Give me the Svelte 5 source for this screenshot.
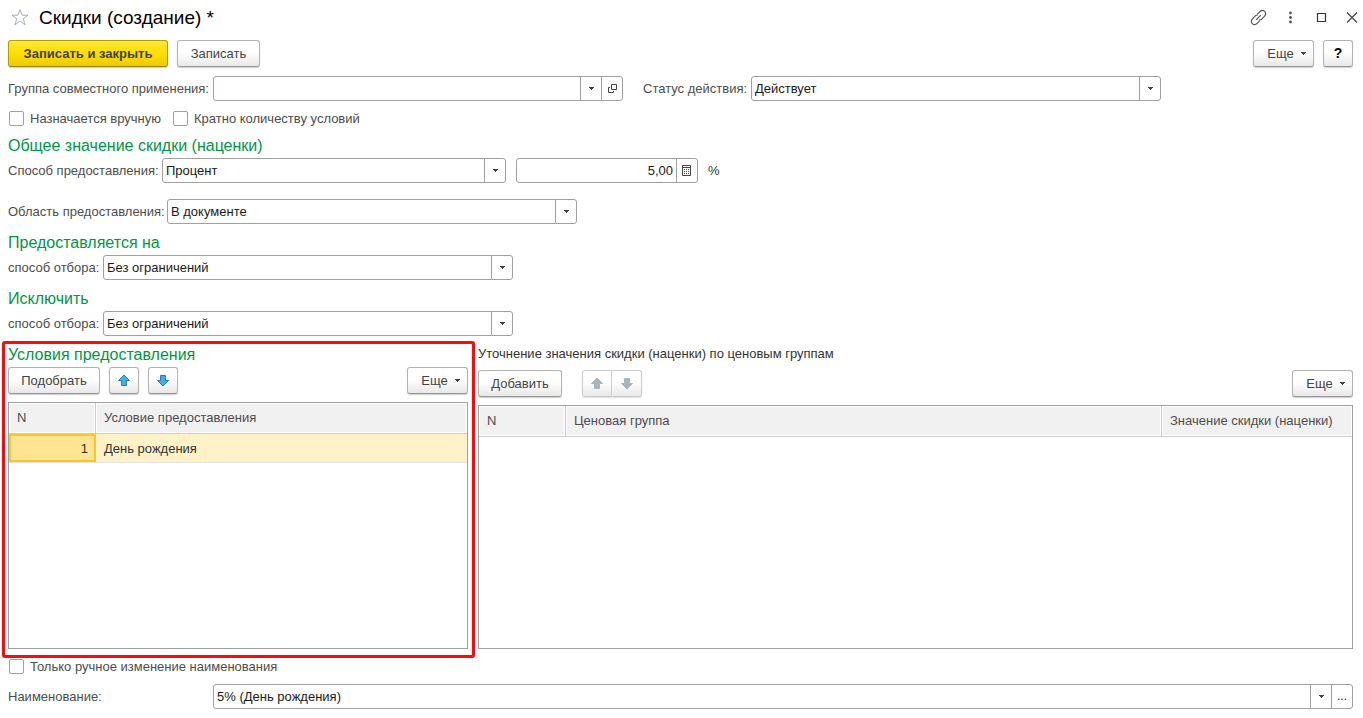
<script>
  let group = $state('');
  let status = $state('Действует');
  let method = $state('Процент');
  let amount = $state('5,00');
  let area = $state('В документе');
  let include = $state('Без ограничений');
  let exclude = $state('Без ограничений');
  let name = $state('5% (День рождения)');
  let manual = $state(false);
  let multiple = $state(false);
  let manualName = $state(false);
  const conditions = [{ n: 1, title: 'День рождения' }];
</script>

{#snippet caret()}
  <svg class="caret" width="5" height="3" viewBox="0 0 5 3" aria-hidden="true"><path d="M0 0h5v1H4v1H3v1H2V2H1V1H0z" fill="#444" /></svg>
{/snippet}

{#snippet arrow(down)}
  <svg width="14" height="14" viewBox="0 0 14 14" aria-hidden="true">
    <path class="arrow" d={down ? 'M7 12L1.5 6.5H4.5V1.5H9.5V6.5H12.5z' : 'M7 1L12.5 6.5H9.5V11.5H4.5V6.5H1.5z'} stroke-linejoin="round" />
  </svg>
{/snippet}

{#snippet more()}
  <button class="btn more" type="button">Еще {@render caret()}</button>
{/snippet}

{#snippet choice(id, value, extra)}
  <div class="field {extra}">
    <select {id}><option>{value}</option></select>
    <span class="side">{@render caret()}</span>
  </div>
{/snippet}

<main>
  <header>
    <button class="icon" type="button" aria-label="В избранное">
      <svg width="20" height="20" viewBox="0 0 20 20"><path d="M10 1.5l2 5.7h6l-4.8 3.6 1.9 6-5.1-3.6-5.1 3.6 1.9-6L2 7.2h6z" fill="none" stroke="#a9b1bc" stroke-width="1" /></svg>
    </button>
    <h1>Скидки (создание) *</h1>
    <div class="window">
      <button class="icon" type="button" aria-label="Ссылка">
        <svg width="18" height="18" viewBox="0 0 18 18" fill="none" stroke="#555" stroke-width="1.2">
          <path d="M7.2 5.300l2.700-2.700c1.400-1.400 3.500-1.400 4.800-.2s1.300 3.400-.1 4.800l-2.900 2.900c-.8.8-1.700 1-2.700.9" />
          <path d="M9.800 11.700l-2.700 2.700c-1.400 1.400-3.500 1.400-4.800.2s-1.300-3.400.1-4.800l2.900-2.900c.8-.8 1.700-1 2.700-.9" />
          <path d="M6.200 10.800l4.600-4.600" />
        </svg>
      </button>
      <button class="icon" type="button" aria-label="Меню">
        <svg width="18" height="18" viewBox="0 0 18 18" fill="#555"><circle cx="9.5" cy="4" r="1.400" /><circle cx="9.5" cy="8.500" r="1.400" /><circle cx="9.5" cy="13" r="1.400" /></svg>
      </button>
      <button class="icon" type="button" aria-label="Развернуть">
        <svg width="18" height="18" viewBox="0 0 18 18"><path d="M5.500 4.500h8v8h-8z" fill="none" stroke="#333" stroke-width="1.200" /></svg>
      </button>
      <button class="icon" type="button" aria-label="Закрыть">
        <svg width="18" height="18" viewBox="0 0 18 18"><path d="M4 3.500l10 10M14 3.500l-10 10" stroke="#444" stroke-width="1.200" /></svg>
      </button>
    </div>
  </header>

  <div class="bar commands">
    <button class="btn primary" type="button">Записать и закрыть</button>
    <button class="btn" type="button">Записать</button>
    <span class="grow"></span>
    {@render more()}
    <button class="btn help" type="button" aria-label="Справка">?</button>
  </div>

  <div class="row">
    <label class="wide" for="group">Группа совместного применения:</label>
    <div class="field">
      <input id="group" bind:value={group} />
      <button class="side" type="button" aria-label="Выбрать">{@render caret()}</button>
      <button class="side" type="button" aria-label="Открыть">
        <svg width="10" height="10" viewBox="0 0 10 10" fill="none" stroke="#444"><path d="M4.500.5h5v5h-5z" /><path d="M3 3.500H1.500v5h5V7" /></svg>
      </button>
    </div>
    <label class="status" for="status">Статус действия:</label>
    {@render choice('status', status, '')}
  </div>

  <div class="checks">
    <label><input type="checkbox" bind:checked={manual} />Назначается вручную</label>
    <label><input type="checkbox" bind:checked={multiple} />Кратно количеству условий</label>
  </div>

  <section>
    <h2>Общее значение скидки (наценки)</h2>
    <div class="row">
      <label class="method" for="method">Способ предоставления:</label>
      {@render choice('method', method, 'medium')}
      <div class="field small">
        <input id="amount" class="number" aria-label="Процент скидки" bind:value={amount} />
        <button class="side" type="button" aria-label="Калькулятор">
          <svg width="10" height="11" viewBox="0 0 10 11"><path d="M.5.5h8v10h-8zM1 2.500h7" fill="none" stroke="#444" /><path d="M2 4h1v1H2zM4 4h1v1H4zM6 4h1v1H6zM2 6h1v1H2zM4 6h1v1H4zM6 6h1v1H6zM2 8h1v1H2zM4 8h1v1H4zM6 8h1v1H6z" fill="#444" /></svg>
        </button>
      </div>
      <span class="unit">%</span>
    </div>
    <div class="row area">
      <label class="method" for="area">Область предоставления:</label>
      {@render choice('area', area, '')}
    </div>
  </section>

  <section>
    <h2>Предоставляется на</h2>
    <div class="row">
      <label class="filter" for="include">способ отбора:</label>
      {@render choice('include', include, '')}
    </div>
  </section>

  <section>
    <h2>Исключить</h2>
    <div class="row">
      <label class="filter" for="exclude">способ отбора:</label>
      {@render choice('exclude', exclude, '')}
    </div>
  </section>

  <div class="panels">
    <section class="panel marked">
      <h2>Условия предоставления</h2>
      <div class="bar">
        <button class="btn pick" type="button">Подобрать</button>
        <button class="btn move" type="button" aria-label="Переместить вверх">{@render arrow(false)}</button>
        <button class="btn move" type="button" aria-label="Переместить вниз">{@render arrow(true)}</button>
        <span class="grow"></span>
        {@render more()}
      </div>
      <div class="grid">
        <table>
          <thead><tr><th class="num">N</th><th>Условие предоставления</th></tr></thead>
          <tbody>
            {#each conditions as item}
              <tr><td class="current">{item.n}</td><td>{item.title}</td></tr>
            {/each}
          </tbody>
        </table>
      </div>
    </section>

    <section class="panel groups">
      <h3>Уточнение значения скидки (наценки) по ценовым группам</h3>
      <div class="bar">
        <button class="btn add" type="button">Добавить</button>
        <div class="pair">
          <button class="btn move" type="button" disabled aria-label="Переместить вверх">{@render arrow(false)}</button>
          <button class="btn move" type="button" disabled aria-label="Переместить вниз">{@render arrow(true)}</button>
        </div>
        <span class="grow"></span>
        {@render more()}
      </div>
      <div class="grid">
        <table>
          <thead><tr><th class="num">N</th><th>Ценовая группа</th><th class="value">Значение скидки (наценки)</th></tr></thead>
        </table>
      </div>
    </section>
  </div>

  <div class="checks last">
    <label><input type="checkbox" bind:checked={manualName} />Только ручное изменение наименования</label>
  </div>

  <div class="row">
    <label class="wide" for="name">Наименование:</label>
    <div class="field full">
      <input id="name" bind:value={name} />
      <button class="side" type="button" aria-label="Выбрать">{@render caret()}</button>
      <button class="side dots" type="button" aria-label="Изменить">...</button>
    </div>
  </div>
</main>

<style>
  :global(body) { background: #fff; }
  main, main * { box-sizing: border-box; }
  main {
    display: flex;
    flex-direction: column;
    min-height: 100vh;
    padding: 0 10px 9px 8px;
    color: #4d4d4d;
    font: 13px/17px "Liberation Sans", Arial, sans-serif;
  }
  button, input, select { font: inherit; color: inherit; margin: 0; }
  h1, h2, h3 { margin: 0; font-weight: 400; }
  header { display: flex; align-items: center; height: 36px; margin: 0 -10px 4px 0; }
  h1 { margin-left: 9px; color: #000; font-size: 19px; line-height: 24px; }
  .icon { display: grid; place-items: center; padding: 0; border: 0; background: none; }
  header > .icon { margin-left: 2px; }
  .window { display: flex; gap: 13px; margin-left: auto; padding-right: 2px; }
  .bar { display: flex; align-items: center; gap: 9px; }
  .commands { margin-bottom: 9px; }
  .grow { flex: 1; }
  .btn {
    display: flex;
    align-items: center;
    justify-content: center;
    height: 27px;
    padding: 0 12px;
    border: 1px solid #b3b3b3;
    border-bottom-color: #999;
    border-radius: 3px;
    background: linear-gradient(#fff 45%, #e8e8e8);
    box-shadow: 0 1px 1px #ccc;
    color: #444;
    white-space: nowrap;
  }
  .primary {
    min-width: 160px;
    border-color: #b59c00 #b59c00 #9a8500;
    background: linear-gradient(#ffe83b, #ffe000 45%, #eccb00);
    font-weight: 700;
  }
  .commands .btn:nth-child(2) { min-width: 83px; }
  .more { gap: 7px; width: 61px; padding: 0 6px 0 12px; }
  .help { width: 30px; padding: 0; color: #000; font-size: 14px; font-weight: 700; }
  .move { width: 30px; padding: 0; }
  .pick { min-width: 92px; }
  .add { min-width: 84px; }
  .arrow { fill: #41aef0; stroke: #2b7eb4; }
  .pair { display: flex; margin-left: 11px; }
  .pair .btn { border-color: #ccc; box-shadow: 0 1px 1px #ddd; }
  .pair .btn:first-child { border-radius: 3px 0 0 3px; }
  .pair .btn:last-child { border-left: 0; border-radius: 0 3px 3px 0; }
  .pair .arrow { fill: #aab4bb; stroke: #aab4bb; }
  .row { display: flex; align-items: center; }
  .row label { flex: none; white-space: nowrap; }
  .wide { width: 205px; }
  .status { width: 108px; margin-left: 20px; }
  .method { width: 154px; }
  .area .method { width: 159px; }
  .filter { width: 95px; }
  .area { margin-top: 16px; }
  .field {
    display: flex;
    flex: 0 1 410px;
    min-width: 0;
    height: 25px;
    overflow: hidden;
    border: 1px solid #a0a0a0;
    border-radius: 3px;
    background: #fff;
    color: #1a1a1a;
  }
  .medium { flex-basis: 344px; }
  .small { flex-basis: 182px; margin-left: 10px; }
  .full { flex: 1; }
  .field input, .field select {
    flex: 1;
    min-width: 0;
    padding: 0 3px;
    border: 0;
    outline: 0;
    appearance: none;
    background: none;
  }
  .field .number { text-align: right; }
  .side {
    display: grid;
    place-items: center;
    flex: none;
    width: 21px;
    padding: 0;
    border: 0;
    border-left: 1px solid #a0a0a0;
    background: none;
    pointer-events: none;
  }
  button.side { pointer-events: auto; }
  .dots { font-size: 12px; }
  .unit { margin-left: 10px; color: #333; }
  .checks { display: flex; gap: 12px; margin: 9px 0 8px; padding-left: 1px; }
  .last { margin-bottom: 9px; }
  .checks label { display: flex; align-items: center; gap: 6px; }
  .checks input {
    appearance: none;
    width: 15px;
    height: 15px;
    border: 1px solid #a0a0a0;
    border-radius: 2px;
    background: #fff;
  }
  .checks input:checked { background: #777; box-shadow: inset 0 0 0 3px #fff; }
  section { margin-bottom: 8px; }
  h2 { padding-top: 1px; margin-bottom: 2px; color: #009646; font-size: 16px; line-height: 20px; }
  h3 { margin-bottom: 6px; color: #333; font-size: 13px; line-height: 20px; }
  .panels { display: flex; flex: 1; gap: 10px; }
  .panel { display: flex; flex-direction: column; min-width: 0; margin: 0; }
  .marked { position: relative; flex: 460 1 0; }
  .marked::after {
    content: "";
    position: absolute;
    inset: -3px -7px -9px -6px;
    border: 3px solid #ff0a0a;
    border-radius: 3px;
    pointer-events: none;
  }
  .groups { flex: 875 1 0; }
  .grid { flex: 1; min-height: 120px; margin-top: 8px; border: 1px solid #a0a0a0; }
  table { width: 100%; border-collapse: separate; border-spacing: 0; table-layout: fixed; }
  th {
    height: 31px;
    padding: 0 8px 2px;
    border-right: 1px solid #ccc;
    border-bottom: 1px solid #ccc;
    background: #f1f1f1;
    box-shadow: inset 0 0 0 1px #fff;
    font-weight: 400;
    text-align: left;
    white-space: nowrap;
  }
  th:last-child { border-right: 0; }
  .num { width: 87px; }
  .value { width: 190px; }
  td {
    height: 29px;
    padding: 0 8px;
    border-bottom: 1px solid #e3e3e3;
    background: #fff2c8;
    color: #333;
  }
  .current { background: #ffe591; box-shadow: inset 0 0 0 2px #fcc624; text-align: right; }
</style>
